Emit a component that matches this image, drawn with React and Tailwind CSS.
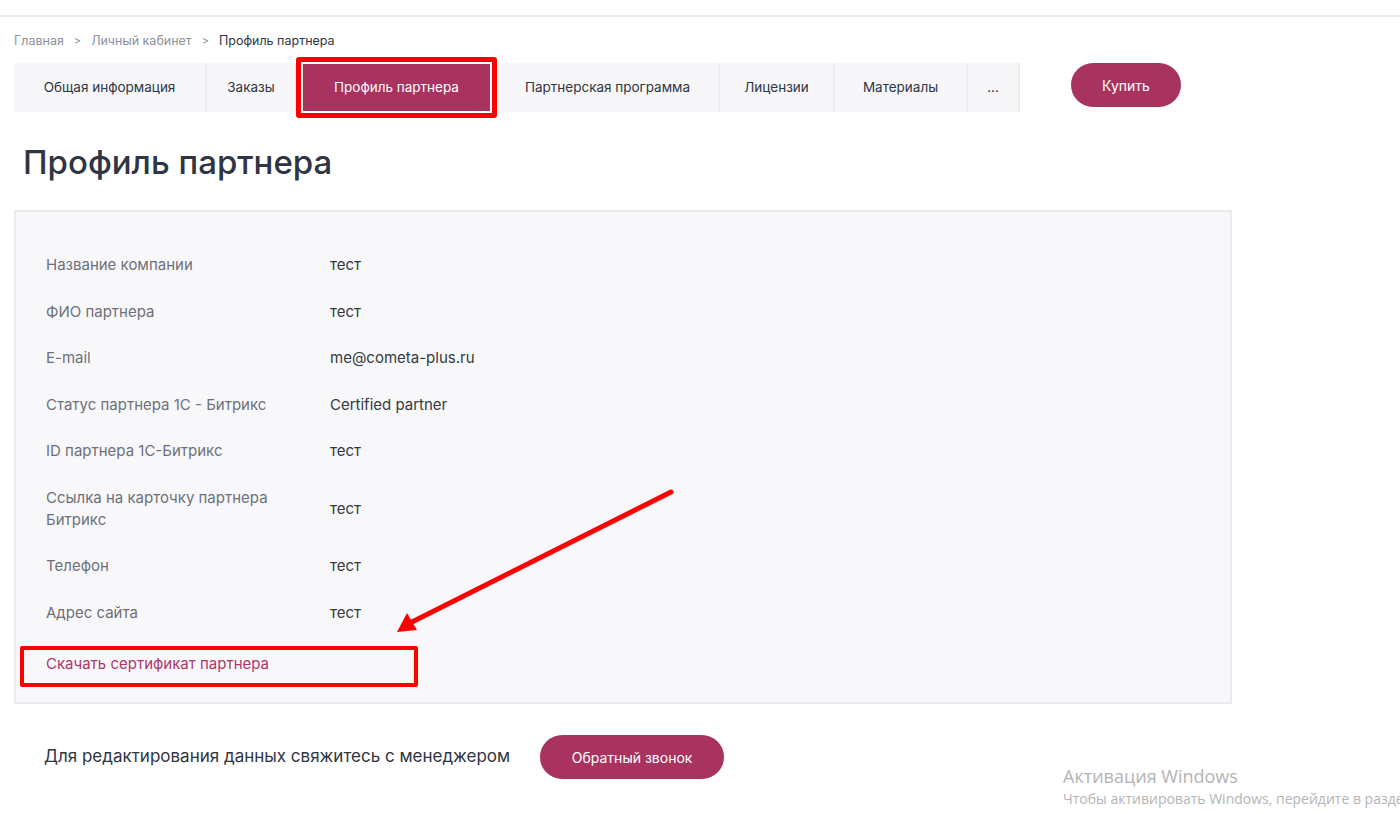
import { useState } from 'react';

const tabs = [
  { title: 'Общая информация', w: 'w-[193px]' },
  { title: 'Заказы', w: 'w-[90px]' },
  { title: 'Профиль партнера', w: 'w-[200px]', active: true },
  { title: 'Партнерская программа', w: 'w-[223px]' },
  { title: 'Лицензии', w: 'w-[115px]' },
  { title: 'Материалы', w: 'w-[133px]' },
  { title: '...', w: 'w-[52px]' },
];

const rows = [
  ['Название компании', 'тест'],
  ['ФИО партнера', 'тест'],
  ['E-mail', 'me@cometa-plus.ru'],
  ['Статус партнера 1С - Битрикс', 'Certified partner'],
  ['ID партнера 1С-Битрикс', 'тест'],
  ['Ссылка на карточку партнера Битрикс', 'тест'],
  ['Телефон', 'тест'],
  ['Адрес сайта', 'тест'],
];

export default function App() {
  const [tab] = useState('Профиль партнера');

  return (
    <div className="relative min-h-[814px] w-full overflow-hidden bg-white font-['Inter',sans-serif] text-[#2f3542]">
      <div className="h-[17px] border-b-2 border-[#ececec]" />

      <div className="px-[14px]">
        {/* breadcrumbs */}
        <nav className="mt-[16px] flex items-center text-[12.5px] leading-[16px] text-[#8c909a]">
          <span>Главная</span>
          <span className="mx-[10px] text-[11px]">&gt;</span>
          <span>Личный кабинет</span>
          <span className="mx-[10px] text-[11px]">&gt;</span>
          <span className="text-[#2f3542]">Профиль партнера</span>
        </nav>

        {/* tabs */}
        <div className="mt-[14px] flex items-start">
          <div className="flex h-[49px]">
            {tabs.map((t) =>
              t.title === tab ? (
                <div key={t.title} className={`relative flex ${t.w} bg-white py-[1px] pl-[6px] pr-[7px]`}>
                  <div className="flex flex-1 items-center justify-center bg-[#a8335f] text-[13.5px] text-white">
                    {t.title}
                  </div>
                  <div className="absolute -left-[1px] -top-[6px] -bottom-[6px] right-0 rounded-[3px] border-[5px] border-[#ff0000]" />
                </div>
              ) : (
                <div
                  key={t.title}
                  className={`flex ${t.w} items-center justify-center border-r-2 border-[#eeeef1] bg-[#f7f7f9] text-[13.5px] text-[#2f3542]`}
                >
                  {t.title}
                </div>
              )
            )}
          </div>
          <button className="ml-[51px] h-[44px] w-[110px] rounded-full bg-[#a8335f] text-[14px] text-white">
            Купить
          </button>
        </div>

        <h1 className="ml-[9px] mt-[30px] text-[33px] font-medium leading-[40px] text-[#2f3542]">
          Профиль партнера
        </h1>

        {/* card */}
        <div className="mt-[28px] w-[1218px] border-2 border-[#ebebee] bg-[#f8f8fa] pb-[27px] pl-[30px] pt-[30px]">
          {rows.map(([label, value]) => (
            <div key={label} className="flex items-center py-[12.25px] text-[15px] leading-[22px]">
              <div className="w-[284px] pr-[40px] text-[#6e7079]">{label}</div>
              <div className="text-[#353841]">{value}</div>
            </div>
          ))}
          <div className="relative mt-[17px] text-[15px] leading-[22px]">
            <a className="text-[#b03669]">Скачать сертификат партнера</a>
            <div className="absolute -left-[26px] -top-[7px] h-[41px] w-[398px] rounded-[2px] border-[4px] border-[#ff0000]" />
          </div>
        </div>

        <div className="mt-[31px] flex items-center pl-[30px]">
          <span className="text-[17px] text-[#2f3542]">Для редактирования данных свяжитесь с менеджером</span>
          <button className="ml-[30px] h-[44px] w-[184px] rounded-full bg-[#a8335f] text-[14px] text-white">
            Обратный звонок
          </button>
        </div>
      </div>

      {/* annotation arrow */}
      <svg className="absolute left-0 top-0" width="1400" height="814" viewBox="0 0 1400 814" fill="none">
        <line x1="671" y1="492" x2="412" y2="622" stroke="#ff0000" strokeWidth="5" strokeLinecap="round" />
        <polygon points="397,632 407,613 417,630" fill="#ff0000" />
      </svg>

      {/* windows watermark */}
      <div className="absolute left-[1063px] top-[764px] whitespace-nowrap font-['Open_Sans',sans-serif] text-[#b4b4b4]">
        <div className="text-[18px] leading-[24px]">Активация Windows</div>
        <div className="text-[14px] leading-[22px]">Чтобы активировать Windows, перейдите в раздел</div>
      </div>
    </div>
  );
}
